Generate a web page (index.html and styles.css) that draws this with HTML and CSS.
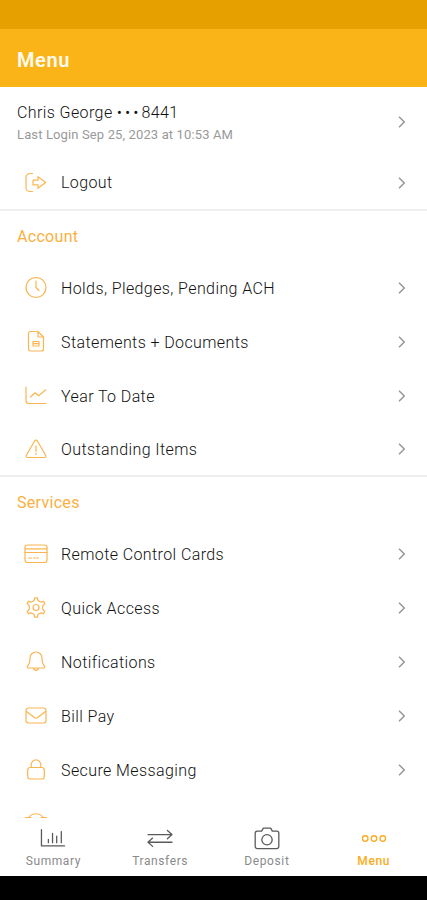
FILE: index.html
```html
<!DOCTYPE html>
<html lang="en">
<head>
  <meta charset="UTF-8" />
  <meta name="viewport" content="width=device-width, initial-scale=1.0"/>
  <title>Menu</title>
  <link rel="stylesheet" href="styles.css">
</head>
<body>

<!-- Chevron shared by all rows -->
<svg class="hidden">
  <symbol id="chevron" viewBox="0 0 8 12"><path d="M1.500 1.200L6.300 6l-4.800 4.800"/></symbol>
</svg>

<div class="status-bar"></div>
<header>
  <h1>Menu</h1>
</header>

<main>
  <!-- Profile -->
  <section>
    <a class="profile">
      <div class="profile-text">
        <div class="name">Chris George <span class="dots">•••</span>8441</div>
        <div class="last-login">Last Login Sep 25, 2023 at 10:53 AM</div>
      </div>
      <svg class="chevron"><use href="#chevron"/></svg>
    </a>
    <a class="row">
      <svg class="icon" viewBox="0 0 24 24"><path d="M8.500 2.500H6a4 4 0 0 0-4 4v10a4 4 0 0 0 4 4h2.500M9 9.200h5V5.700l7.700 5.800-7.700 5.800v-3.500H9z"/></svg>
      <span class="label">Logout</span>
      <svg class="chevron"><use href="#chevron"/></svg>
    </a>
  </section>

  <!-- Account -->
  <section>
    <h2>Account</h2>
    <a class="row">
      <svg class="icon" viewBox="0 0 24 24"><circle cx="12" cy="11.500" r="10"/><path d="M12 5v6.500l3 3"/></svg>
      <span class="label">Holds, Pledges, Pending ACH</span>
      <svg class="chevron"><use href="#chevron"/></svg>
    </a>
    <a class="row">
      <svg class="icon" viewBox="0 0 24 24"><path d="M6.500 1.500H14L19.500 7v12a2 2 0 0 1-2 2h-11a2 2 0 0 1-2-2V3.500a2 2 0 0 1 2-2zM14 1.500V7h5.500M9 11.500h6V16H9zM9 13.700h6"/></svg>
      <span class="label">Statements + Documents</span>
      <svg class="chevron"><use href="#chevron"/></svg>
    </a>
    <a class="row">
      <svg class="icon" viewBox="0 0 24 24"><path d="M2 3v13.500a3 3 0 0 0 3 3h17M6.500 13L11 8.800l3.500 3L21.500 6"/></svg>
      <span class="label">Year To Date</span>
      <svg class="chevron"><use href="#chevron"/></svg>
    </a>
    <a class="row">
      <svg class="icon" viewBox="0 0 24 24"><path d="M10.600 4a1.600 1.600 0 0 1 2.800 0l8.200 14.300a1.400 1.400 0 0 1-1.200 2.200H3.600a1.400 1.400 0 0 1-1.200-2.200zM12 8.800v5.400M12 16.200v1.300"/></svg>
      <span class="label">Outstanding Items</span>
      <svg class="chevron"><use href="#chevron"/></svg>
    </a>
  </section>

  <!-- Services -->
  <section>
    <h2>Services</h2>
    <a class="row">
      <svg class="icon" viewBox="0 0 24 24"><rect x="1" y="3" width="22" height="17.500" rx="2.500"/><path d="M1 6.800h22M1 10.500h22M4.500 16h3M9.500 16h2M12.500 16h2"/></svg>
      <span class="label">Remote Control Cards</span>
      <svg class="chevron"><use href="#chevron"/></svg>
    </a>
    <a class="row">
      <svg class="icon" viewBox="0 0 24 24"><path d="M10.800 1.800h2.400l.9 2.900 2.400 1.400 3-.7 1.300 2.100-2.100 2.300v3.400l2.100 2.300-1.300 2.100-3-.7-2.400 1.400-.9 2.900h-2.400l-.9-2.900-2.400-1.400-3 .7-1.300-2.100 2.100-2.300V9.800L3.200 7.500l1.300-2.100 3 .7 2.400-1.400z"/><circle cx="12" cy="11.500" r="3"/></svg>
      <span class="label">Quick Access</span>
      <svg class="chevron"><use href="#chevron"/></svg>
    </a>
    <a class="row">
      <svg class="icon" viewBox="0 0 24 24"><path d="M12 2a6 6 0 0 0-6 6c0 4.500-1 6.500-2.500 8-.6.900-.2 2 .9 2h15.200c1.100 0 1.500-1.100.9-2C19 14.500 18 12.500 18 8a6 6 0 0 0-6-6zM9.700 18a2.300 2.300 0 0 0 4.600 0"/></svg>
      <span class="label">Notifications</span>
      <svg class="chevron"><use href="#chevron"/></svg>
    </a>
    <a class="row">
      <svg class="icon" viewBox="0 0 24 24"><rect x="2" y="4" width="20" height="15" rx="2.500"/><path d="M2.500 7.500l7.800 6a2.800 2.800 0 0 0 3.400 0l7.800-6"/></svg>
      <span class="label">Bill Pay</span>
      <svg class="chevron"><use href="#chevron"/></svg>
    </a>
    <a class="row">
      <svg class="icon" viewBox="0 0 24 24"><rect x="3.700" y="9.500" width="16.600" height="11.500" rx="2.500"/><path d="M7.200 9.500V6.700a4.800 4.800 0 0 1 9.600 0v2.800"/></svg>
      <span class="label">Secure Messaging</span>
      <svg class="chevron"><use href="#chevron"/></svg>
    </a>
    <a class="row next">
      <svg class="icon" viewBox="0 0 24 24"><path d="M4.500 4.500C6.500 2 8 1 10 1h4c2 0 3.500 1 5.500 3.500M1 7V5.500a1 1 0 0 1 1-1h5M23 7V5.500a1 1 0 0 0-1-1h-5M1 7v12a2 2 0 0 0 2 2h18a2 2 0 0 0 2-2V7"/></svg>
      <span class="label">Credit Card Rewards</span>
      <svg class="chevron"><use href="#chevron"/></svg>
    </a>
  </section>
</main>

<!-- Bottom tabs -->
<nav>
  <a class="tab">
    <svg viewBox="0 0 28 26"><path d="M1.500 3v17.500h25M9 13.500V17M13.500 7v10M18 10v7M23 5v12"/></svg>
    <span>Summary</span>
  </a>
  <a class="tab">
    <svg viewBox="0 0 28 26"><path d="M1 8.200h26M22 3.700l5 4.500-5 4.500M27 16.500H1M6 12l-5 4.500L6 21"/></svg>
    <span>Transfers</span>
  </a>
  <a class="tab">
    <svg viewBox="0 0 28 26"><path d="M3.500 4.500h4.700L10 1.200h8l1.800 3.300h4.700a2.300 2.300 0 0 1 2.300 2.300v14.400a2.300 2.300 0 0 1-2.300 2.300h-21a2.300 2.300 0 0 1-2.300-2.300V6.800a2.300 2.300 0 0 1 2.300-2.300z"/><circle cx="14" cy="13.800" r="5.600"/></svg>
    <span>Deposit</span>
  </a>
  <a class="tab active">
    <svg viewBox="0 0 28 26"><circle cx="4.500" cy="12.500" r="3"/><circle cx="14" cy="12.500" r="3"/><circle cx="23.500" cy="12.500" r="3"/></svg>
    <span>Menu</span>
  </a>
</nav>
<div class="system-bar"></div>

</body>
</html>
```
FILE: styles.css
```css
* { box-sizing: border-box; }
body { font-family: Roboto, Arial, sans-serif; margin: 0; height: 900px; display: flex; flex-direction: column; overflow: hidden; background: white; color: #111; }
svg { fill: none; stroke-linecap: round; stroke-linejoin: round; flex-shrink: 0; }
.hidden { display: none; }

.status-bar { height: 29px; background: #e6a100; flex-shrink: 0; }
header { height: 58px; padding: 3px 17px 0; background: #fab417; display: flex; align-items: center; flex-shrink: 0; }
h1 { margin: 0; color: #fffaf0; font-size: 20px; font-weight: 600; letter-spacing: 0.6px; }

main { flex: 1; min-height: 0; overflow: hidden; }
section + section { border-top: 2px solid #efefef; }
h2 { margin: 0; padding-left: 17px; height: 50px; line-height: 52px; color: #fbb040; font-size: 16px; font-weight: 400; letter-spacing: 0.3px; }

.profile { height: 69px; padding: 0 21px 0 17px; display: flex; align-items: center; justify-content: space-between; }
.profile-text { padding-top: 4px; }
.name { font-size: 16px; font-weight: 300; line-height: 22px; letter-spacing: 0.4px; }
.dots { letter-spacing: 3px; }
.last-login { font-size: 13px; line-height: 22px; color: #999; letter-spacing: 0.13px; }

.row { height: 54px; padding: 0 21px 0 24px; display: flex; align-items: center; }
section + section .row:last-child { height: 52px; }
section:first-child .row { height: 53px; }
section + section .row.next { height: 56px; }
.icon { width: 24px; height: 24px; stroke: #fbb550; stroke-width: 1.2; }
.label { flex: 1; margin-left: 13px; font-size: 16px; font-weight: 300; letter-spacing: 0.4px; }
.chevron { width: 8px; height: 12px; stroke: #999; stroke-width: 1.6; }
.next .label, .next .chevron { margin-top: 2px; }

nav { height: 58px; display: grid; grid-template-columns: repeat(4, 1fr); background: white; flex-shrink: 0; }
.tab { display: flex; flex-direction: column; align-items: center; padding-top: 9px; font-size: 12px; line-height: 14px; color: #8a8a8a; letter-spacing: 0.6px; }
.tab svg { width: 26px; height: 24px; margin-bottom: 3px; stroke: #5a5a5a; stroke-width: 1.4; }
.tab.active { color: #fbab20; font-weight: 500; }
.tab.active svg { stroke: #fbab20; }
.system-bar { height: 24px; background: black; flex-shrink: 0; }
```
